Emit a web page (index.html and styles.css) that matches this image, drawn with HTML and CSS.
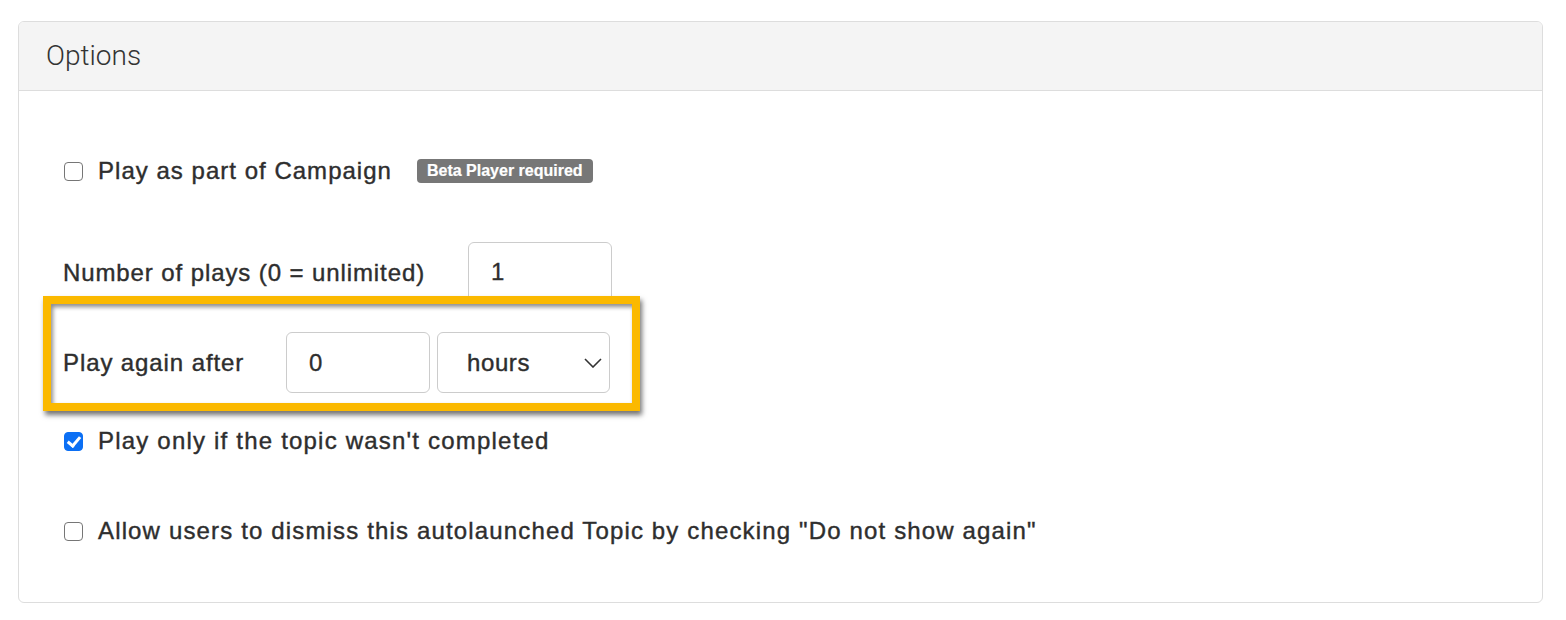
FILE: index.html
```html
<!DOCTYPE html>
<html>
<head>
<meta charset="utf-8">
<link rel="stylesheet" href="styles.css">
</head>
<body>
<div class="card">
  <div class="card-header">Options</div>
  <div class="card-body">
    <label class="row check-row row-campaign">
      <input type="checkbox" class="cb">
      <span class="check-label">Play as part of Campaign</span>
      <span class="badge">Beta Player required</span>
    </label>
    <div class="row field-row row-plays">
      <span class="field-label label-plays">Number of plays (0 = unlimited)</span>
      <input class="text-input" type="text" value="1">
    </div>
    <div class="row field-row row-again">
      <span class="field-label label-again">Play again after</span>
      <input class="text-input" type="text" value="0">
      <div class="select">
        <span class="select-value">hours</span>
        <svg class="chevron" width="18" height="10" viewBox="0 0 18 10"><path d="M1 1 L9 9 L17 1" fill="none" stroke="#333" stroke-width="1.6"/></svg>
      </div>
      <div class="highlight"></div>
    </div>
    <label class="row check-row row-completed">
      <input type="checkbox" class="cb" checked>
      <span class="check-label">Play only if the topic wasn't completed</span>
    </label>
    <label class="row check-row row-dismiss">
      <input type="checkbox" class="cb">
      <span class="check-label">Allow users to dismiss this autolaunched Topic by checking "Do not show again"</span>
    </label>
  </div>
</div>
</body>
</html>
```

FILE: styles.css
```css
html, body {
  margin: 0;
  padding: 0;
  background: #ffffff;
}
body {
  font-family: "Liberation Sans", Arial, sans-serif;
  color: #2e2e2e;
}
.card {
  margin: 21px 23px 0 18px;
  border: 1px solid #dddddd;
  border-radius: 6px;
  height: 582px;
  box-sizing: border-box;
  overflow: hidden;
}
.card-header {
  height: 69px;
  box-sizing: border-box;
  background: #f4f4f4;
  border-bottom: 1px solid #dddddd;
  padding: 0 0 2px 27px;
  display: flex;
  align-items: center;
  font-family: Roboto, "Liberation Sans", sans-serif;
  font-weight: 300;
  font-size: 28px;
  color: #333333;
}
.card-body {
  display: flex;
  flex-direction: column;
  padding: 60px 0 0 44px;
}
.row {
  display: flex;
  align-items: center;
  font-size: 24px;
  letter-spacing: 1.15px;
  -webkit-text-stroke: 0.4px #2e2e2e;
}
.row-campaign {
  letter-spacing: 1.02px;
}
.row-completed {
  letter-spacing: 1.2px;
}
.row-plays, .row-again {
  letter-spacing: 0.9px;
}
.check-row {
  height: 40px;
  cursor: pointer;
}
.field-row {
  height: 61px;
}
.row-plays {
  margin-top: 51px;
}
.row-again {
  margin-top: 29px;
  position: relative;
}
.row-completed {
  margin-top: 28px;
}
.row-dismiss {
  margin-top: 50px;
}
.cb {
  -webkit-appearance: none;
  appearance: none;
  width: 19px;
  height: 19px;
  margin: 0 15px 0 1px;
  border: 1px solid #767676;
  border-radius: 4px;
  background: #ffffff;
  box-sizing: border-box;
  position: relative;
  flex: none;
}
.cb:checked {
  background: #0b6ff4;
  border-color: #0b6ff4;
}
.cb:checked::after {
  content: "";
  position: absolute;
  left: 5px;
  top: 1px;
  width: 5px;
  height: 10px;
  border: solid #ffffff;
  border-width: 0 3px 3px 0;
  transform: rotate(40deg);
}
.check-label {
  white-space: nowrap;
}
.badge {
  margin-left: 25px;
  background: #777777;
  color: #ffffff;
  -webkit-text-stroke: 0.2px #ffffff;
  font-weight: bold;
  font-size: 16px;
  letter-spacing: 0px;
  height: 24px;
  padding: 0 10px;
  border-radius: 4px;
  display: inline-flex;
  align-items: center;
}
.field-label {
  white-space: nowrap;
}
.label-plays {
  width: 405px;
}
.label-again {
  width: 223px;
}
.text-input {
  width: 144px;
  height: 61px;
  box-sizing: border-box;
  border: 1px solid #cccccc;
  border-radius: 6px;
  padding: 0 0 0 22px;
  font-family: "Liberation Sans", Arial, sans-serif;
  font-size: 24px;
  color: #2e2e2e;
  -webkit-text-stroke: 0.3px #2e2e2e;
  background: #ffffff;
  outline: none;
  margin: 0;
}
.row-plays .text-input {
  height: 60px;
  align-self: flex-start;
}
.select {
  width: 173px;
  height: 61px;
  margin-left: 7px;
  box-sizing: border-box;
  border: 1px solid #cccccc;
  border-radius: 6px;
  display: flex;
  align-items: center;
  justify-content: space-between;
  padding: 0 7px 0 29px;
  letter-spacing: 0.6px;
}
.chevron {
  display: block;
}
.highlight {
  position: absolute;
  left: -20px;
  top: -36px;
  width: 597px;
  height: 115px;
  box-sizing: border-box;
  border: 8px solid #fbb900;
  box-shadow: 2px 4px 5px rgba(0, 0, 0, 0.55), inset 2px 3px 4px rgba(0, 0, 0, 0.45);
  pointer-events: none;
}
```
